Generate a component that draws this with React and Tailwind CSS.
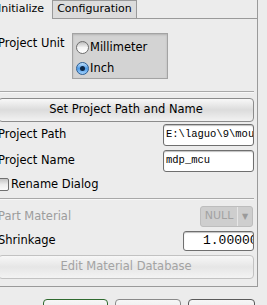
import React from "react";

const Separator = () => (
    <div className="h-[2px] border-t border-[#a8a8a8] border-b border-b-[#f8f8f8]" />
);

const Radio = ({ checked, label }) => (
    <div className="flex items-center h-[19px]">
        {checked ? (
            <span className="w-[13px] h-[13px] rounded-full border border-[#2a5d94] bg-linear-to-b from-[#bfe0fb] via-[#4f9be6] to-[#9fd0fb] flex items-center justify-center">
                <span className="w-[5px] h-[5px] rounded-full bg-[#0b2646]" />
            </span>
        ) : (
            <span className="w-[13px] h-[13px] rounded-full border border-[#6e6e6e] bg-linear-to-b from-[#bdbdbd] via-[#f4f4f4] to-[#ffffff]" />
        )}
        <span className="ml-[1px]">{label}</span>
    </div>
);

const Field = ({ value, width }) => (
    <div className={`h-[22px] ${width} border border-[#6f6f6f] rounded-[3px] bg-white shadow-[inset_0_1px_1px_rgba(0,0,0,0.25)] pl-[2px] flex items-center overflow-hidden whitespace-nowrap text-[10.5px]`} style={{ fontFamily: '"Liberation Mono", monospace' }}>
        {value}
    </div>
);

export default function App() {
    return (
        <div className="w-[267px] h-[305px] overflow-hidden bg-[#ececec] text-[11.5px] text-black" style={{ fontFamily: '"DejaVu Sans", sans-serif' }}>
            <div className="-ml-[6px] w-[264px]">
                {/* tabs */}
                <div className="flex h-[19px]">
                    <div className="w-[58px] flex items-center pl-[4px] text-[11px]">Initialize</div>
                    <div className="w-[85px] border border-[#9a9a9a] bg-[#dcdcdc] flex items-center justify-center text-[11px]">Configuration</div>
                    <div className="flex-1 border-b border-r border-[#9a9a9a]" />
                </div>

                {/* panel */}
                <div className="border-r border-b border-[#9a9a9a] pl-[4px] pr-[3px] pb-[7px] flex flex-col">
                    <div className="mt-[14px] flex">
                        <div className="w-[74px] pt-[2px]">Project Unit</div>
                        <div className="w-[96px] h-[46px] border border-[#a3a3a3] bg-[#d3d3d3] shadow-[inset_0_1px_2px_rgba(0,0,0,0.15)] pl-[3px] pt-[4px] flex flex-col gap-[2px]">
                            <Radio label="Millimeter" />
                            <Radio checked label="Inch" />
                        </div>
                    </div>

                    <div className="mt-[12px]">
                        <Separator />
                    </div>

                    <button className="mt-[5px] h-[24px] rounded-[4px] border border-[#8c8c8c] bg-linear-to-b from-[#f8f8f8] via-[#dcdcdc] to-[#f2f2f2] flex items-center justify-center">
                        Set Project Path and Name
                    </button>

                    <div className="mt-[2px] flex items-center justify-between">
                        <span>Project Path</span>
                        <Field value="E:\laguo\9\mouse" width="w-[91px]" />
                    </div>
                    <div className="mt-[4px] flex items-center justify-between">
                        <span>Project Name</span>
                        <Field value="mdp_mcu" width="w-[91px]" />
                    </div>

                    <div className="mt-[5px] h-[15px] flex items-center -ml-[2px]">
                        <span className="w-[13px] h-[13px] rounded-[2px] border border-[#707070] bg-linear-to-b from-[#c4c4c4] via-[#ececec] to-[#fafafa]" />
                        <span className="ml-[2px]">Rename Dialog</span>
                    </div>

                    <div className="mt-[6px]">
                        <Separator />
                    </div>

                    <div className="mt-[6px] flex items-center justify-between">
                        <span className="text-[#9c9c9c]">Part Material</span>
                        <div className="h-[21px] w-[53px] mr-[1px] rounded-[3px] border border-[#bdbdbd] bg-[#cecece] flex text-[#a2a2a2] text-[11px]">
                            <span className="flex-1 flex items-center justify-center">NULL</span>
                            <span className="w-[15px] border-l border-[#e6e6e6] flex items-center justify-center text-[8px] text-[#9a9a9a]">▼</span>
                        </div>
                    </div>

                    <div className="mt-[4px] flex items-center justify-between">
                        <span>Shrinkage</span>
                        <div className="h-[20px] w-[71px] border border-[#6f6f6f] rounded-[3px] bg-white shadow-[inset_0_1px_1px_rgba(0,0,0,0.25)] pl-[19px] flex items-center overflow-hidden whitespace-nowrap text-[13px]" style={{ fontFamily: '"Liberation Mono", monospace' }}>
                            1.00000
                        </div>
                    </div>

                    <button className="mt-[4px] h-[24px] rounded-[4px] border border-[#c2c2c2] bg-linear-to-b from-[#f7f7f7] via-[#e6e6e6] to-[#f3f3f3] flex items-center justify-center text-[#a3a3a3]">
                        Edit Material Database
                    </button>
                </div>

                {/* dialog buttons */}
                <div className="mt-[12px] flex justify-end pr-[3px]">
                    <div className="w-[65px] h-[24px] rounded-[4px] border border-[#2f6a2f] bg-linear-to-b from-[#f7f7f7] to-[#dcdcdc]" />
                    <div className="ml-[7px] w-[66px] h-[24px] rounded-[4px] border border-[#8a8a8a] bg-linear-to-b from-[#f7f7f7] to-[#dcdcdc]" />
                    <div className="ml-[7px] w-[67px] h-[24px] rounded-[4px] border border-[#5a5a5a] bg-linear-to-b from-[#f7f7f7] to-[#dcdcdc]" />
                </div>
            </div>
        </div>
    );
}
